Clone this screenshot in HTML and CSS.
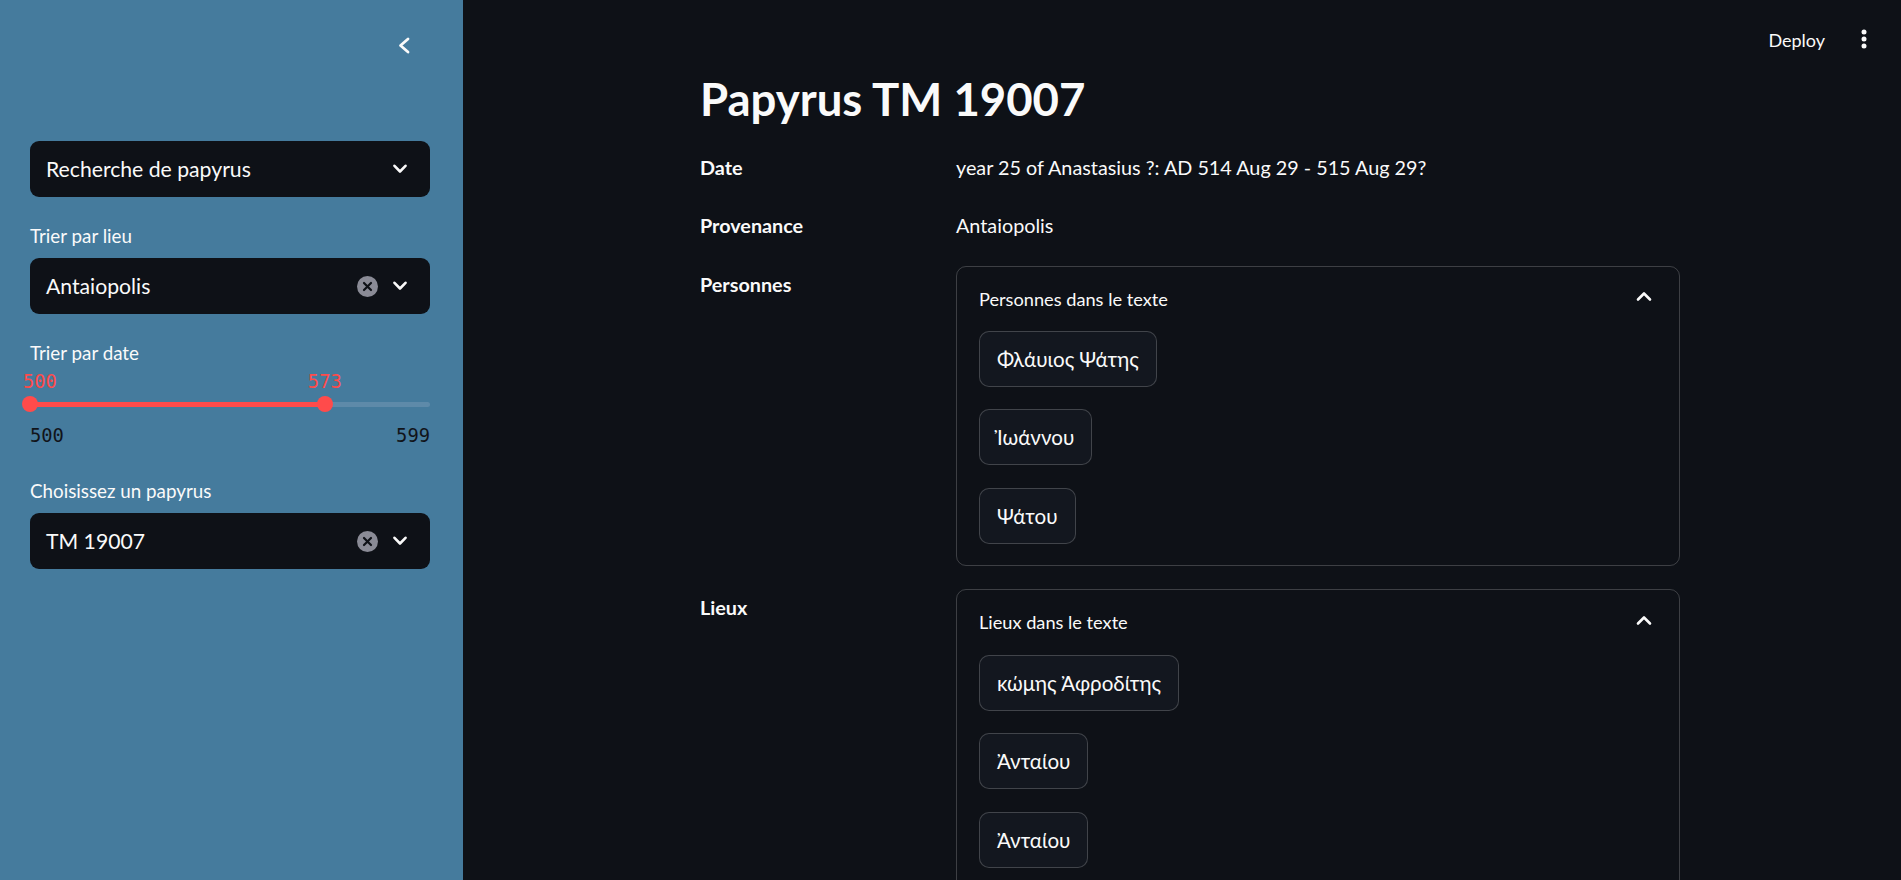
FILE: index.html
```html
<!DOCTYPE html>
<html lang="fr">
<head>
<meta charset="utf-8">
<title>Papyrus TM 19007</title>
<link rel="stylesheet" href="styles.css">
</head>
<body>
<div class="app">
  <aside class="sidebar">
    <div class="sidebar-top">
      <button class="icon-btn collapse-btn" aria-label="Fermer">
        <svg width="28" height="28" viewBox="0 0 28 28"><polyline points="18,7 10.5,13.5 18,20" fill="none" stroke="#fafafa" stroke-width="2.8" stroke-linecap="round" stroke-linejoin="round"/></svg>
      </button>
    </div>
    <div class="widgets">
      <div class="select">
        <span class="select-value">Recherche de papyrus</span>
        <span class="select-icons">
          <svg class="chevron-down" width="14" height="10" viewBox="0 0 14 10"><polyline points="1.5,1.8 7,7.5 12.5,1.8" fill="none" stroke="#fafafa" stroke-width="2.6" stroke-linecap="round" stroke-linejoin="round"/></svg>
        </span>
      </div>
      <div class="widget">
        <label class="widget-label">Trier par lieu</label>
        <div class="select">
          <span class="select-value">Antaiopolis</span>
          <span class="select-icons">
            <svg class="clear-icon" width="21" height="21" viewBox="0 0 21 21"><circle cx="10.5" cy="10.5" r="10.5" fill="#8a8b96"/><path d="M7 7 L14 14 M14 7 L7 14" stroke="#0e1117" stroke-width="2.2" stroke-linecap="round"/></svg>
            <svg class="chevron-down" width="14" height="10" viewBox="0 0 14 10"><polyline points="1.5,1.8 7,7.5 12.5,1.8" fill="none" stroke="#fafafa" stroke-width="2.6" stroke-linecap="round" stroke-linejoin="round"/></svg>
          </span>
        </div>
      </div>
      <div class="widget">
        <label class="widget-label">Trier par date</label>
        <div class="slider">
          <div class="slider-values">
            <span class="thumb-value thumb-value-start">500</span>
            <span class="thumb-value" style="left:73.7%">573</span>
          </div>
          <div class="slider-rail">
            <div class="slider-track"></div>
            <div class="slider-fill" style="width:73.7%"></div>
            <span class="thumb" style="left:0%"></span>
            <span class="thumb" style="left:73.7%"></span>
          </div>
          <div class="slider-ticks"><span>500</span><span>599</span></div>
        </div>
      </div>
      <div class="widget">
        <label class="widget-label">Choisissez un papyrus</label>
        <div class="select">
          <span class="select-value">TM 19007</span>
          <span class="select-icons">
            <svg class="clear-icon" width="21" height="21" viewBox="0 0 21 21"><circle cx="10.5" cy="10.5" r="10.5" fill="#8a8b96"/><path d="M7 7 L14 14 M14 7 L7 14" stroke="#0e1117" stroke-width="2.2" stroke-linecap="round"/></svg>
            <svg class="chevron-down" width="14" height="10" viewBox="0 0 14 10"><polyline points="1.5,1.8 7,7.5 12.5,1.8" fill="none" stroke="#fafafa" stroke-width="2.6" stroke-linecap="round" stroke-linejoin="round"/></svg>
          </span>
        </div>
      </div>
    </div>
  </aside>

  <main class="main">
    <header class="topbar">
      <button class="deploy">Deploy</button>
      <button class="icon-btn menu-btn" aria-label="Menu">
        <svg width="32" height="28" viewBox="0 0 32 28"><circle cx="16" cy="6" r="2.5" fill="#fafafa"/><circle cx="16" cy="13" r="2.5" fill="#fafafa"/><circle cx="16" cy="20" r="2.5" fill="#fafafa"/></svg>
      </button>
    </header>

    <div class="content">
      <h1 class="title">Papyrus TM 19007</h1>
      <div class="rows">
        <div class="row">
          <div class="row-label">Date</div>
          <div class="row-value">year 25 of Anastasius ?: AD 514 Aug 29 - 515 Aug 29?</div>
        </div>
        <div class="row">
          <div class="row-label">Provenance</div>
          <div class="row-value">Antaiopolis</div>
        </div>
        <div class="row">
          <div class="row-label">Personnes</div>
          <div class="expander">
            <div class="expander-header">
              <span>Personnes dans le texte</span>
              <svg class="chevron-up" width="16" height="12" viewBox="0 0 16 12"><polyline points="2,9.5 8,3.5 14,9.5" fill="none" stroke="#fafafa" stroke-width="2.6" stroke-linecap="round" stroke-linejoin="round"/></svg>
            </div>
            <div class="expander-body">
              <button class="pill-btn">Φλάυιος Ψάτης</button>
              <button class="pill-btn">Ἰωάννου</button>
              <button class="pill-btn">Ψάτου</button>
            </div>
          </div>
        </div>
        <div class="row row-after-expander">
          <div class="row-label">Lieux</div>
          <div class="expander">
            <div class="expander-header">
              <span>Lieux dans le texte</span>
              <svg class="chevron-up" width="16" height="12" viewBox="0 0 16 12"><polyline points="2,9.5 8,3.5 14,9.5" fill="none" stroke="#fafafa" stroke-width="2.6" stroke-linecap="round" stroke-linejoin="round"/></svg>
            </div>
            <div class="expander-body">
              <button class="pill-btn">κώμης Ἀφροδίτης</button>
              <button class="pill-btn">Ἀνταίου</button>
              <button class="pill-btn">Ἀνταίου</button>
            </div>
          </div>
        </div>
      </div>
    </div>
  </main>
</div>
</body>
</html>
```

FILE: styles.css
```css
* { box-sizing: border-box; }

html, body {
  margin: 0;
  height: 100%;
  overflow: hidden;
}

body {
  font-family: "Lato", "Noto Sans", sans-serif;
  background: #0e1117;
  color: #fafafa;
}

.app {
  display: flex;
  height: 100vh;
}

/* ---------- Sidebar ---------- */
.sidebar {
  width: 463px;
  flex: none;
  background: #457b9d;
  padding: 0 33px 0 30px;
}

.sidebar-top {
  height: 141px;
  display: flex;
  justify-content: flex-end;
  align-items: flex-start;
  padding: 31.5px 12px 0 0;
}

.icon-btn {
  background: none;
  border: 0;
  padding: 0;
  display: flex;
  align-items: center;
  justify-content: center;
  cursor: pointer;
}

.collapse-btn { width: 28px; height: 28px; }

.widgets {
  display: flex;
  flex-direction: column;
  gap: 25px;
}

.widget {
  display: flex;
  flex-direction: column;
  gap: 8px;
}

.widget-label {
  font-size: 18.8px;
  line-height: 28px;
  color: #fafafa;
}

.select {
  height: 56px;
  background: #0e1117;
  border-radius: 9px;
  display: flex;
  align-items: center;
  padding: 0 23px 0 16px;
  font-size: 21.2px;
  color: #fafafa;
}

.select-value { flex: 1; }

.select-icons {
  display: flex;
  align-items: center;
  gap: 15.5px;
}

.clear-icon, .chevron-down { display: block; }

/* slider */
.slider { padding-bottom: 4px; }

.slider-values {
  position: relative;
  height: 14px;
  font-family: "DejaVu Sans Mono", monospace;
  font-size: 18.8px;
  line-height: 14px;
  color: #ff4b4b;
}

.thumb-value {
  position: absolute;
  top: 0;
  transform: translateX(-50%);
}

.thumb-value-start {
  left: -7px;
  transform: none;
}

.slider-rail {
  position: relative;
  height: 16px;
  margin-top: 7px;
}

.slider-track {
  position: absolute;
  left: 0;
  right: 0;
  top: 5.5px;
  height: 5px;
  border-radius: 3px;
  background: #5e8aa9;
}

.slider-fill {
  position: absolute;
  left: 0;
  top: 5.5px;
  height: 5px;
  border-radius: 3px;
  background: #ff4b4b;
}

.thumb {
  position: absolute;
  top: 0;
  width: 16px;
  height: 16px;
  margin-left: -8px;
  border-radius: 50%;
  background: #ff4b4b;
}

.slider-ticks {
  display: flex;
  justify-content: space-between;
  margin-top: 12px;
  font-family: "DejaVu Sans Mono", monospace;
  font-size: 18.8px;
  line-height: 24px;
  color: #11141a;
}

/* ---------- Main ---------- */
.main {
  flex: 1;
  min-width: 0;
  display: flex;
  flex-direction: column;
  padding-left: 16px;
}

.topbar {
  height: 71px;
  flex: none;
  display: flex;
  justify-content: flex-end;
  align-items: flex-start;
  padding: 26px 21px 0 0;
}

.deploy {
  background: none;
  border: 0;
  padding: 0;
  margin-right: 23px;
  font-family: "Lato", "Noto Sans", sans-serif;
  font-size: 18px;
  line-height: 28px;
  color: #fafafa;
  cursor: pointer;
}

.menu-btn { width: 32px; height: 28px; }

.content {
  width: 980px;
  margin: 0 auto;
}

.title {
  margin: 0;
  font-size: 45.5px;
  line-height: 55px;
  font-weight: 700;
  color: #fafafa;
}

.rows {
  margin-top: 22.6px;
  display: flex;
  flex-direction: column;
  gap: 25.5px;
}

.row {
  display: grid;
  grid-template-columns: 240px 1fr;
  column-gap: 16px;
  align-items: start;
}

.row-after-expander { margin-top: -2px; }

.row-label {
  padding-top: 3px;
  font-weight: 700;
  font-size: 19.8px;
  line-height: 30px;
}

.row-value {
  padding-top: 3px;
  font-size: 19.8px;
  line-height: 30px;
}

.expander {
  border: 1px solid rgba(250, 250, 250, 0.2);
  border-radius: 10px;
}

.expander-header {
  display: flex;
  justify-content: space-between;
  align-items: center;
  padding: 18px 27px 0 22px;
  font-size: 18.2px;
  line-height: 28px;
}

.chevron-up {
  display: block;
  margin-bottom: 5px;
}

.expander-body {
  display: flex;
  flex-direction: column;
  align-items: flex-start;
  gap: 22.4px;
  padding: 18.5px 22px 21px;
}

.pill-btn {
  font-family: "Lato", "Noto Sans", sans-serif;
  font-size: 20.6px;
  line-height: 30px;
  padding: 12px 17px;
  border: 1px solid rgba(250, 250, 250, 0.2);
  border-radius: 10px;
  background: #13171f;
  color: #fafafa;
  cursor: pointer;
}
```
